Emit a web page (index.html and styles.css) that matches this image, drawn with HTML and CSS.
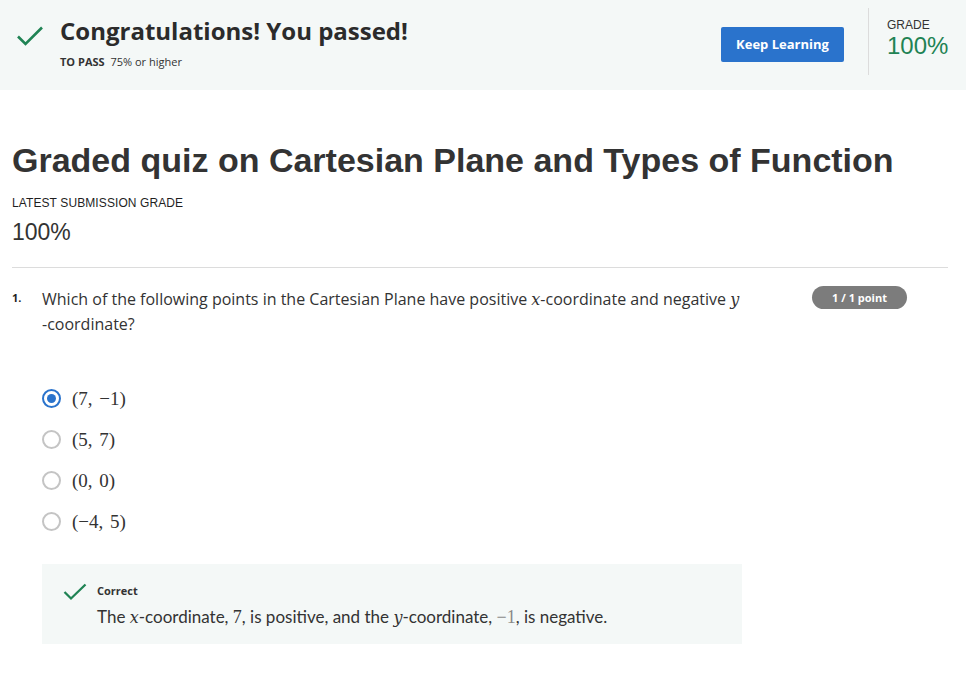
FILE: index.html
```html
<!DOCTYPE html>
<html>
<head>
<meta charset="utf-8">
<link rel="stylesheet" href="styles.css">
</head>
<body>
<header class="banner">
  <div class="banner-main">
    <svg class="banner-check" width="28" height="22" viewBox="0 0 28 22"><path d="M2 11.5 L9.5 19 L26 2.5" fill="none" stroke="#1f8354" stroke-width="2.6"/></svg>
    <div class="banner-text">
      <h2 class="banner-title">Congratulations! You passed!</h2>
      <div class="banner-sub"><span class="to-pass">TO PASS</span> 75% or higher</div>
    </div>
  </div>
  <button class="keep-btn">Keep Learning</button>
  <div class="banner-grade">
    <div class="grade-label">GRADE</div>
    <div class="grade-value">100%</div>
  </div>
</header>

<main class="content">
  <h1 class="quiz-title">Graded quiz on Cartesian Plane and Types of Function</h1>
  <div class="latest-label">LATEST SUBMISSION GRADE</div>
  <div class="latest-value">100%</div>
  <hr class="rule">

  <section class="question">
    <div class="q-num">1.</div>
    <div class="q-body">
      <div class="q-head">
        <p class="q-text">Which of the following points in the Cartesian Plane have positive <span class="m">x</span>-coordinate and negative <span class="m">y</span><br>-coordinate?</p>
        <span class="badge">1 / 1 point</span>
      </div>
      <ul class="options">
        <li class="opt"><span class="radio checked"></span><span class="mt">(7, −1)</span></li>
        <li class="opt"><span class="radio"></span><span class="mt">(5, 7)</span></li>
        <li class="opt"><span class="radio"></span><span class="mt">(0, 0)</span></li>
        <li class="opt"><span class="radio"></span><span class="mt">(−4, 5)</span></li>
      </ul>
      <div class="feedback">
        <svg class="fb-check" width="24" height="18" viewBox="0 0 24 18"><path d="M1.5 9 L8 15.5 L22.5 1.5" fill="none" stroke="#1f8354" stroke-width="2.3"/></svg>
        <div class="fb-text">
          <div class="fb-title">Correct</div>
          <div class="fb-body">The <span class="m">x</span>-coordinate, <span class="mt">7</span>, is positive, and the <span class="m">y</span>-coordinate, <span class="mt neg">−1</span>, is negative.</div>
        </div>
      </div>
    </div>
  </section>
</main>
</body>
</html>
```

FILE: styles.css
```css
* { box-sizing: border-box; }
body {
  margin: 0;
  background: #fff;
  font-family: "Open Sans", "Liberation Sans", sans-serif;
  color: #1f1f1f;
}
.banner {
  display: flex;
  align-items: center;
  height: 90px;
  background: #f4f8f7;
  padding: 0 18px 0 16px;
}
.banner-main {
  flex: 1;
  display: flex;
  align-items: flex-start;
  margin-bottom: 6px;
}
.banner-check { margin-top: 10px; margin-right: 16px; }
.banner-title {
  margin: 0;
  font-size: 24px;
  font-weight: 700;
  color: #2b2b2b;
  line-height: 32px;
}
.banner-sub {
  margin-top: 7px;
  font-size: 11px;
  color: #333;
}
.to-pass { font-weight: 700; margin-right: 3px; }
.keep-btn {
  width: 123px;
  height: 35px;
  background: #2a73cc;
  color: #fff;
  border: none;
  border-radius: 2px;
  font-family: "Open Sans", sans-serif;
  font-weight: 700;
  font-size: 13px;
  margin-right: 24px;
  margin-bottom: 2px;
}
.banner-grade {
  align-self: flex-start;
  margin-top: 8px;
  height: 67px;
  width: 80px;
  border-left: 1px solid #dcdcdc;
  padding: 10px 0 0 18px;
  font-family: "Liberation Sans", Arial, sans-serif;
}
.grade-label {
  font-size: 12px;
  color: #333;
  line-height: 14px;
}
.grade-value {
  font-size: 24px;
  color: #1f8354;
  line-height: 28px;
}
.content {
  padding: 0 18px 0 12px;
}
.quiz-title {
  margin: 50px 0 0;
  font-family: "Liberation Sans", Arial, sans-serif;
  font-size: 34px;
  font-weight: 700;
  color: #333;
  line-height: 40px;
}
.latest-label {
  margin-top: 16px;
  font-family: "Liberation Sans", Arial, sans-serif;
  font-size: 12px;
  color: #1f1f1f;
  letter-spacing: 0.1px;
}
.latest-value {
  margin-top: 9px;
  font-family: "Liberation Sans", Arial, sans-serif;
  font-size: 23px;
  color: #333;
}
.rule {
  margin: 21px 0 0;
  border: none;
  border-top: 1px solid #dcdcdc;
}
.question {
  display: flex;
  margin-top: 19px;
}
.q-num {
  width: 30px;
  font-size: 11px;
  font-weight: 700;
  line-height: 22px;
  color: #1f1f1f;
}
.q-body { flex: 1; }
.q-head {
  display: flex;
  align-items: flex-start;
}
.q-text {
  margin: 0;
  width: 716px;
  font-size: 16px;
  line-height: 25px;
  color: #333;
}
.badge {
  margin-left: 54px;
  margin-top: -1px;
  background: #7c7c7c;
  color: #fff;
  font-size: 11px;
  font-weight: 700;
  border-radius: 12px;
  height: 23px;
  line-height: 23px;
  width: 95px;
  flex: none;
  text-align: center;
}
.m {
  font-family: "DejaVu Serif", "Liberation Serif", serif;
  font-style: italic;
  font-size: 16px;
}
.mt {
  font-family: "Liberation Serif", "DejaVu Serif", serif;
  font-size: 19px;
  color: #333;
  word-spacing: 2px;
}
.options {
  list-style: none;
  margin: 41px 0 0;
  padding: 0;
}
.opt {
  display: flex;
  align-items: center;
  height: 41px;
}
.radio {
  width: 19px;
  height: 19px;
  border: 2px solid #c4c4c4;
  border-radius: 50%;
  margin-right: 11px;
  display: flex;
  align-items: center;
  justify-content: center;
}
.radio.checked { border-color: #2a73cc; }
.radio.checked::after {
  content: "";
  width: 9px;
  height: 9px;
  border-radius: 50%;
  background: #2a73cc;
}
.feedback {
  margin-top: 22px;
  width: 700px;
  height: 80px;
  background: #f4f8f7;
  display: flex;
  padding: 19px 0 0 21px;
}
.fb-check { margin-right: 10px; margin-top: 0; }
.fb-title {
  font-size: 11px;
  font-weight: 700;
  color: #333;
}
.fb-body {
  margin-top: 8px;
  font-family: "Lato", "Roboto", sans-serif;
  font-size: 17px;
  color: #333;
}
.fb-body .m { font-size: 16px; }
.fb-body .mt { font-size: 18px; word-spacing: 0; }
.fb-body .neg { color: #888; }
```
